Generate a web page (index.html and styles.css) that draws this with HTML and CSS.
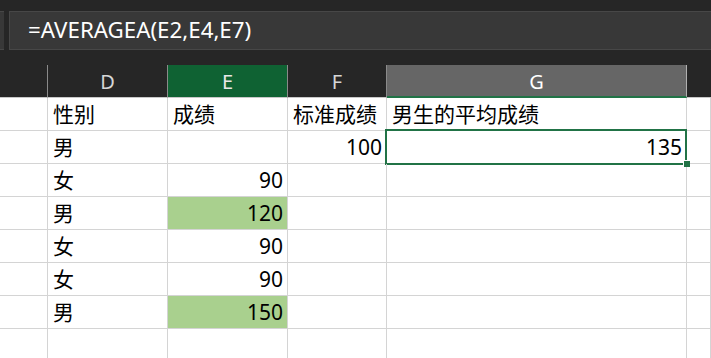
FILE: index.html
```html
<!DOCTYPE html>
<html lang="zh-CN">
<head>
<meta charset="utf-8">
<title>AVERAGEA</title>
<link rel="stylesheet" href="styles.css">
</head>
<body>
<div class="app">
  <div class="formula-bar">
    <div class="fx-stub"></div>
    <div class="fx-input">=AVERAGEA(E2,E4,E7)</div>
  </div>
  <div class="sheet">
    <div class="hdr corner"></div>
    <div class="hdr">D</div>
    <div class="hdr hl">E</div>
    <div class="hdr">F</div>
    <div class="hdr active">G</div>
    <div class="hdr end"></div>

    <div class="c rh"></div><div class="c">性别</div><div class="c">成绩</div><div class="c">标准成绩</div><div class="c">男生的平均成绩</div><div class="c"></div>
    <div class="c rh"></div><div class="c">男</div><div class="c"></div><div class="c num">100</div><div class="c num sel">135</div><div class="c"></div>
    <div class="c rh"></div><div class="c">女</div><div class="c num">90</div><div class="c"></div><div class="c"></div><div class="c"></div>
    <div class="c rh"></div><div class="c">男</div><div class="c num fill">120</div><div class="c"></div><div class="c"></div><div class="c"></div>
    <div class="c rh"></div><div class="c">女</div><div class="c num">90</div><div class="c"></div><div class="c"></div><div class="c"></div>
    <div class="c rh"></div><div class="c">女</div><div class="c num">90</div><div class="c"></div><div class="c"></div><div class="c"></div>
    <div class="c rh"></div><div class="c">男</div><div class="c num fill">150</div><div class="c"></div><div class="c"></div><div class="c"></div>
    <div class="c rh"></div><div class="c"></div><div class="c"></div><div class="c"></div><div class="c"></div><div class="c"></div>
  </div>
</div>
</body>
</html>
```

FILE: styles.css
```css
html, body {
  margin: 0;
  padding: 0;
  background: #ffffff;
}
.app {
  width: 711px;
  height: 358px;
  overflow: hidden;
  font-family: "Noto Sans", "Noto Sans CJK SC", sans-serif;
}
.formula-bar {
  background: #262626;
  height: 65px;
  padding-top: 11px;
  box-sizing: border-box;
  display: flex;
  gap: 5px;
}
.fx-stub {
  width: 4px;
  height: 39px;
  background: #383838;
  border-top: 1px solid #474747;
  border-bottom: 1px solid #474747;
  box-sizing: border-box;
}
.fx-input {
  flex: 1;
  height: 39px;
  background: #383838;
  border-top: 1px solid #474747;
  border-bottom: 1px solid #474747;
  border-left: 1px solid #474747;
  box-sizing: border-box;
  color: #ffffff;
  font-size: 22.3px;
  line-height: 35px;
  padding-left: 18px;
}
.sheet {
  display: grid;
  grid-template-columns: 48px 120px 120px 99px 300px 24px;
  grid-auto-rows: 33px;
}
.hdr {
  background: #262626;
  color: #d6d6d6;
  font-size: 20px;
  line-height: 32px;
  text-align: center;
  border-right: 1px solid #8a8a8a;
  border-bottom: 1px solid #c8c8c8;
  box-sizing: border-box;
  padding-top: 1px;
}
.hdr.hl {
  background: #0f6233;
  color: #e8e8e8;
}
.hdr.active {
  background: #666666;
  color: #ffffff;
  border-right: 1px solid #b0b0b0;
  border-bottom: 2px solid #217346;
}
.hdr.end {
  border-right: none;
}
.c {
  position: relative;
  border-right: 1px solid #d4d4d4;
  border-bottom: 1px solid #d4d4d4;
  box-sizing: border-box;
  font-size: 21px;
  line-height: 32px;
  color: #000000;
  padding: 0 4px 0 5px;
  white-space: nowrap;
}
.c.num {
  text-align: right;
}
.c.fill {
  background: #a9d08e;
}
.c.sel::after {
  content: "";
  position: absolute;
  left: -2px;
  top: -2px;
  right: -1px;
  bottom: -2px;
  border: 2px solid #217346;
  pointer-events: none;
}
.c.sel::before {
  content: "";
  position: absolute;
  right: -4px;
  bottom: -4px;
  width: 6px;
  height: 6px;
  background: #217346;
  border-left: 1px solid #ffffff;
  border-top: 1px solid #ffffff;
  z-index: 2;
}
```
